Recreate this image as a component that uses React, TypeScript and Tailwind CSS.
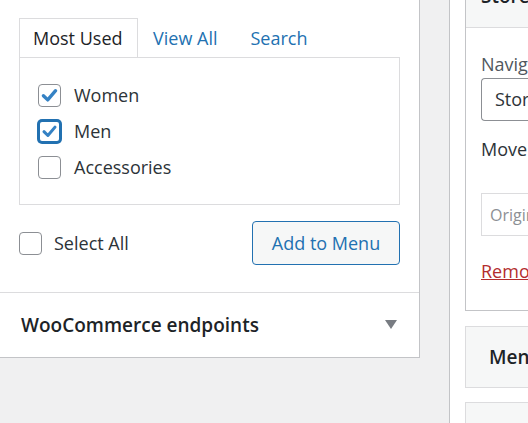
import React from 'react';

const Check = () => (
  <svg viewBox="0 0 20 20" className="w-[21px] h-[21px]">
    <path d="M4.2 10.2 L8.3 14.2 L15.8 5.4" fill="none" stroke="#3582c4" strokeWidth="3.2" strokeLinecap="round" strokeLinejoin="round" />
  </svg>
);

const Box = ({ checked, focused }: { checked?: boolean; focused?: boolean }) => (
  <span
    className={`w-[23px] h-[23px] rounded-[4px] bg-white flex items-center justify-center shrink-0 ${
      focused ? 'border-2 border-[#2271b1] shadow-[0_0_0_1px_#2271b1]' : 'border border-[#8c8f94]'
    }`}
  >
    {checked && <Check />}
  </span>
);

const App = () => {
  const items = [
    { label: 'Women', checked: true },
    { label: 'Men', checked: true, focused: true },
    { label: 'Accessories' },
  ];

  return (
    <div
      className="w-[528px] h-[423px] bg-[#f0f0f1] flex overflow-hidden text-[#2c3338]"
      style={{ fontFamily: '"Open Sans", "Noto Sans", sans-serif' }}
    >
      {/* left panel */}
      <div className="w-[420px] h-[358px] shrink-0 bg-white border-r border-b border-[#c3c4c7] flex flex-col">
        <div className="px-[19px] pt-[18px]">
          <div className="flex items-end text-[18px]">
            <div className="h-[39px] px-[13px] w-[119px] border border-b-0 border-[#dcdcde] flex items-center text-[#1d2327]">
              Most Used
            </div>
            <div className="h-[38px] pl-[15px] pr-[17px] flex items-center text-[#2271b1]">View All</div>
            <div className="h-[38px] px-[16px] flex items-center text-[#2271b1]">Search</div>
          </div>
          <div className="h-[148px] border border-[#dcdcde] pt-[26px] pl-[18px] flex flex-col gap-[13px] text-[18px]">
            {items.map(it => (
              <label key={it.label} className="flex items-center gap-[13px] h-[23px]">
                <Box checked={it.checked} focused={it.focused} />
                <span>{it.label}</span>
              </label>
            ))}
          </div>
          <div className="flex items-center justify-between h-[60px] pt-[16px] text-[18px]">
            <label className="flex items-center gap-[12px]">
              <Box />
              <span className="text-[#2c3338]">Select All</span>
            </label>
            <button className="h-[44px] w-[148px] rounded-[4px] border border-[#2271b1] bg-[#f6f7f7] text-[#2271b1] text-[18px]">
              Add to Menu
            </button>
          </div>
        </div>
        <div className="mt-[27px] border-t border-[#dcdcde] flex-1 flex items-center justify-between pl-[21px] pr-[22px]">
          <span className="text-[19px] font-semibold text-[#1d2327]">WooCommerce endpoints</span>
          <svg viewBox="0 0 12 10" className="w-[12px] h-[10px]">
            <path d="M0 0 H12 L6 9 Z" fill="#787c82" />
          </svg>
        </div>
      </div>

      {/* right column */}
      <div className="ml-[29px] flex-1 bg-white border-l border-[#c3c4c7] pl-[15px] flex flex-col min-w-0">
        <div className="-mt-[20px] shrink-0 border border-r-0 border-[#c3c4c7] flex flex-col">
          <div className="h-[47px] bg-[#f6f7f7] border-b border-[#dcdcde] pl-[15px] pt-[1px] text-[19px] font-semibold text-[#1d2327] whitespace-nowrap overflow-hidden">
            Store
          </div>
          <div className="pl-[15px] pt-[24px] pb-[26px] flex flex-col text-[18px] whitespace-nowrap overflow-hidden">
            <span className="text-[#50575e] leading-[25px]">Navigation Label</span>
            <div className="mt-[1px] h-[43px] border border-[#8c8f94] rounded-[4px] border-r-0 rounded-r-none pl-[13px] flex items-center text-[#2c3338]">
              Store
            </div>
            <span className="mt-[16px] leading-[25px] text-[#2c3338]">Move</span>
            <div className="mt-[31px] h-[43px] border border-[#dcdcde] border-r-0 pl-[8px] flex items-center text-[16px] text-[#8c8f94]">
              Original: Store
            </div>
            <span className="mt-[23px] leading-[25px] text-[#b32d2e] underline">Remove</span>
          </div>
        </div>
        <div className="mt-[15px] shrink-0 h-[62px] bg-[#f6f7f7] border border-r-0 border-[#dcdcde] pl-[23px] flex items-center text-[19px] font-semibold text-[#1d2327] whitespace-nowrap overflow-hidden">
          Menu Settings
        </div>
        <div className="mt-[14px] shrink-0 h-[40px] bg-[#f6f7f7] border border-r-0 border-[#dcdcde]" />
      </div>
    </div>
  );
};

export default App;
